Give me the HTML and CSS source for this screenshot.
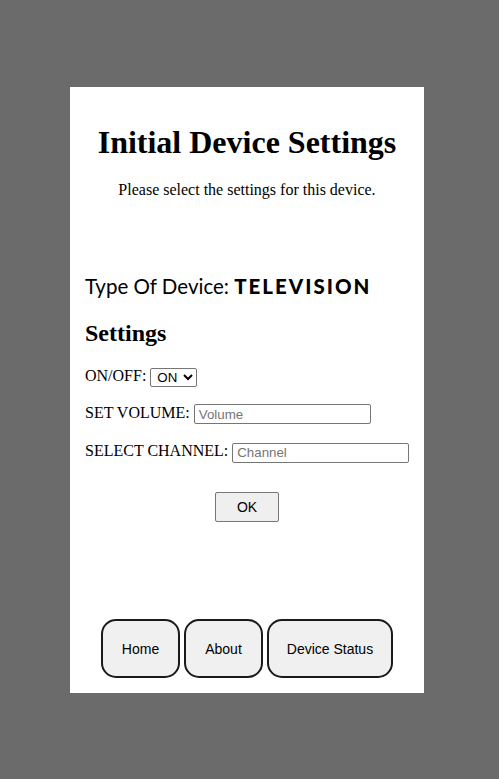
FILE: index.html
```html
<!DOCTYPE html>
<html>
<head>
<meta charset="utf-8">
<link rel="stylesheet" href="styles.css">
</head>
<body>
<div class="card">
  <h1 class="title">Initial Device Settings</h1>
  <p class="intro">Please select the settings for this device.</p>
  <div class="device-type">Type Of Device: <b class="device-name">TELEVISION</b></div>
  <h2 class="section">Settings</h2>
  <div class="row row-first">ON/OFF: <select class="select"><option>ON</option><option>OFF</option></select></div>
  <div class="row row-second">SET VOLUME: <input class="field" type="text" placeholder="Volume"></div>
  <div class="row row-third">SELECT CHANNEL: <input class="field" type="text" placeholder="Channel"></div>
  <div class="ok-wrap"><button class="ok">OK</button></div>
  <nav class="nav">
    <button class="nav-btn">Home</button>
    <button class="nav-btn">About</button>
    <button class="nav-btn nav-btn-wide">Device Status</button>
  </nav>
</div>
</body>
</html>
```
FILE: styles.css
```css
html, body {
  margin: 0;
  padding: 0;
  background: #6b6b6b;
  height: 100%;
}
body {
  font-family: "Liberation Serif", "Times New Roman", serif;
  color: #000;
  padding-top: 87px;
  box-sizing: border-box;
}
.card {
  background: #fff;
  width: 354px;
  height: 606px;
  margin-left: 70px;
  box-sizing: border-box;
  padding: 0 15px;
  display: flex;
  flex-direction: column;
}
.title {
  font-size: 32px;
  font-weight: bold;
  text-align: center;
  margin: 37px 0 0;
  line-height: 37px;
}
.intro {
  font-size: 16px;
  text-align: center;
  margin: 20px 0 0;
  line-height: 18px;
}
.device-type {
  font-family: "Lato", "Noto Sans", sans-serif;
  font-size: 20.5px;
  margin-top: 74px;
  line-height: 26px;
  white-space: nowrap;
}
.device-name {
  font-weight: 900;
  letter-spacing: 2px;
}
.section {
  font-size: 24px;
  font-weight: bold;
  margin: 20px 0 0;
  line-height: 28px;
}
.row {
  font-size: 16px;
  line-height: 22px;
  white-space: nowrap;
}
.row-first {
  margin-top: 18px;
}
.row-second {
  margin-top: 15px;
}
.row-third {
  margin-top: 16px;
}
.select {
  font-family: "Liberation Sans", Arial, sans-serif;
  font-size: 13.3px;
  height: 19px;
  width: 47px;
  padding: 0 0 0 2px;
  border: 1px solid #767676;
  border-radius: 2px;
  background: #fff;
  vertical-align: middle;
}
.field {
  font-family: "Liberation Sans", Arial, sans-serif;
  font-size: 13.3px;
  width: 177px;
  height: 20px;
  box-sizing: border-box;
  border: 1px solid #767676;
  border-radius: 2px;
  padding: 1px 4px;
  vertical-align: middle;
}
.field::placeholder {
  color: #757575;
}
.ok-wrap {
  display: flex;
  justify-content: center;
  margin-top: 29px;
}
.ok {
  font-family: "Liberation Sans", Arial, sans-serif;
  font-size: 14px;
  width: 64px;
  height: 30px;
  background: #efefef;
  border: 1px solid #767676;
  border-radius: 2px;
  color: #000;
}
.nav {
  margin-top: auto;
  margin-bottom: 15px;
  display: flex;
  justify-content: center;
  gap: 4px;
}
.nav-btn {
  font-family: "Liberation Sans", Arial, sans-serif;
  font-size: 14px;
  height: 59px;
  padding: 0 19px;
  background: #f0f0f0;
  border: 2px solid #1a1a1a;
  border-radius: 15px;
  color: #000;
}
.nav-btn-wide {
  padding: 0 18px;
}
```
